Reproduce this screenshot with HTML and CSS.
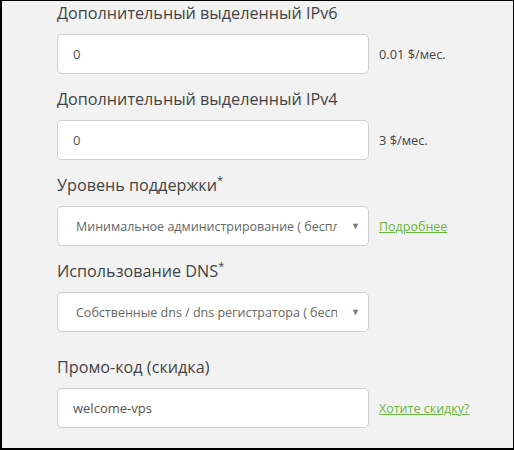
FILE: index.html
```
<!DOCTYPE html>
<html lang="ru">
<head>
    <meta charset="UTF-8">
    <meta name="viewport" content="width=device-width, initial-scale=1.0">
    <title>Заказ VPS</title>
    <link rel="stylesheet" href="styles.css">
</head>
<body>
    <div class="frame">
        <form class="order-form">
            <!-- Extra IPv6 -->
            <div class="field">
                <label for="ipv6">Дополнительный выделенный IPv6</label>
                <div class="row">
                    <input type="text" id="ipv6" value="0">
                    <span class="note">0.01 $/мес.</span>
                </div>
            </div>

            <!-- Extra IPv4 -->
            <div class="field">
                <label for="ipv4">Дополнительный выделенный IPv4</label>
                <div class="row">
                    <input type="text" id="ipv4" value="0">
                    <span class="note">3 $/мес.</span>
                </div>
            </div>

            <!-- Support level -->
            <div class="field">
                <label for="support">Уровень поддержки<sup>*</sup></label>
                <div class="row">
                    <div class="select-wrap">
                        <select id="support">
                            <option>Минимальное администрирование ( бесплатно )</option>
                        </select>
                    </div>
                    <a href="#" class="link">Подробнее</a>
                </div>
            </div>

            <!-- DNS -->
            <div class="field field-wide">
                <label for="dns">Использование DNS<sup>*</sup></label>
                <div class="row">
                    <div class="select-wrap">
                        <select id="dns">
                            <option>Собственные dns / dns регистратора ( бесплатно )</option>
                        </select>
                    </div>
                </div>
            </div>

            <!-- Promo code -->
            <div class="field">
                <label for="promo">Промо-код (скидка)</label>
                <div class="row">
                    <input type="text" id="promo" value="welcome-vps">
                    <a href="#" class="link">Хотите скидку?</a>
                </div>
            </div>
        </form>
    </div>
</body>
</html>
```

FILE: styles.css
```
html, body {
    margin: 0;
    padding: 0;
}
body {
    font-family: "Open Sans", "Noto Sans", sans-serif;
    background-color: #fff;
}
.frame {
    box-sizing: border-box;
    height: 450px;
    overflow: hidden;
    background-color: #f2f2f2;
    border-style: solid;
    border-color: #000;
    border-width: 1px 1px 2px 2px;
}
.order-form {
    padding: 1px 0 0 55px;
}
.field {
    margin-bottom: 14px;
}
.field-wide {
    margin-bottom: 24px;
}
label {
    display: block;
    font-size: 16.2px;
    line-height: 22px;
    color: #444;
    margin-bottom: 10px;
}
label sup {
    font-size: 11px;
    vertical-align: top;
    line-height: 12px;
}
.row {
    display: flex;
    align-items: center;
    gap: 10px;
}
input, select {
    box-sizing: border-box;
    width: 312px;
    height: 40px;
    padding: 0 15px;
    border: 1px solid #cfcfcf;
    border-radius: 5px;
    background: #fff;
    font-family: "Open Sans", "Noto Sans", sans-serif;
    font-size: 13px;
    color: #555;
    outline: none;
}
.select-wrap {
    position: relative;
}
select {
    -webkit-appearance: none;
    appearance: none;
    padding: 0 31px 0 18px;
    font-size: 12.5px;
    color: #666;
}
.select-wrap::after {
    content: "\25BC";
    position: absolute;
    right: 9px;
    top: 13px;
    font-size: 9px;
    color: #777;
    pointer-events: none;
}
.note {
    font-size: 12.8px;
    color: #444;
}
.link {
    font-size: 12.5px;
    color: #6bb545;
    text-decoration: underline;
}
```
